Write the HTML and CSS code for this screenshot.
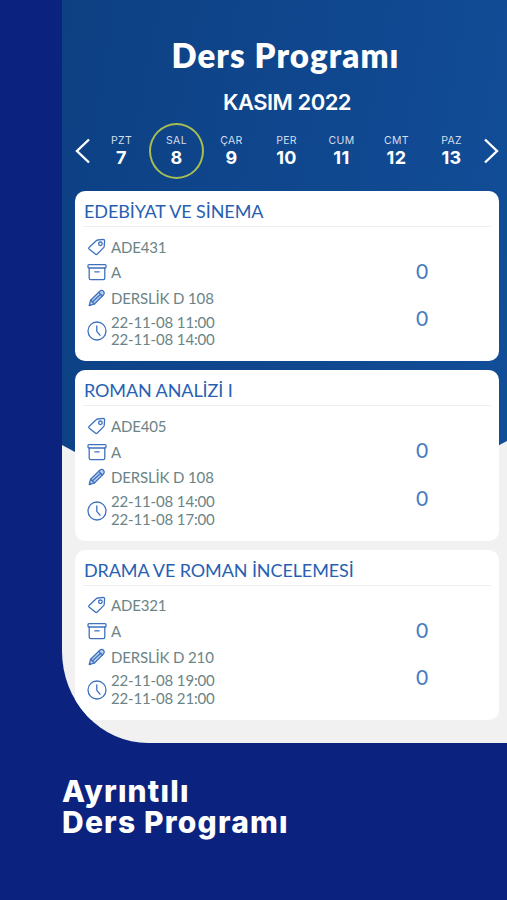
FILE: index.html
```
<!DOCTYPE html>
<html lang="tr">
<head>
    <meta charset="UTF-8">
    <meta name="viewport" content="width=device-width, initial-scale=1.0">
    <title>Ders Programı</title>
    <link rel="stylesheet" href="styles.css">
</head>
<body>
    <svg class="symbols" width="0" height="0">
        <symbol id="tag" viewBox="0 0 20 20">
            <path d="M2.3 10.2 9.5 3.6Q10 3.1 10.8 3L16.2 2.4Q17.6 2.4 17.6 3.8L17.2 9.4Q17.1 10.1 16.6 10.6L10.3 17Q9.3 17.9 8.3 17L2.3 12.3Q1.2 11.2 2.3 10.2Z"/>
            <circle cx="13.4" cy="6.8" r="1.8"/>
        </symbol>
        <symbol id="box" viewBox="0 0 20 20">
            <rect x="1" y="2.6" width="18" height="3.4" rx="1"/>
            <path d="M2.2 6V16Q2.2 17.6 3.8 17.6H16.2Q17.8 17.6 17.8 16V6M7.8 9.8H12.2"/>
        </symbol>
        <symbol id="pencil" viewBox="0 0 20 20">
            <path fill="#bfd2ec" d="M2.2 17.6 3.6 12.2 12.8 3.2Q14.8 1.6 16.5 3.2 18 5 16.6 6.8L7.4 16Z"/>
            <path d="M3.6 12.2 7.4 16M11.8 4.4 15.4 8M5.5 13.7 13.7 6.2M2.6 16.2 3.7 17.2"/>
        </symbol>
        <symbol id="clock" viewBox="0 0 20 20">
            <circle cx="10" cy="10" r="9"/>
            <path d="M9.8 5V10.3L13 14.2"/>
        </symbol>
    </svg>

    <div class="phone">
        <h1>Ders Programı</h1>
        <h2>KASIM 2022</h2>
        <div class="week">
            <svg class="arrow" viewBox="0 0 16 26"><path d="M14 1.5 2 13 14 24.5"/></svg>
            <div class="days">
                <div class="day"><span>PZT</span><b>7</b></div>
                <div class="day selected"><span>SAL</span><b>8</b></div>
                <div class="day"><span>ÇAR</span><b>9</b></div>
                <div class="day"><span>PER</span><b>10</b></div>
                <div class="day"><span>CUM</span><b>11</b></div>
                <div class="day"><span>CMT</span><b>12</b></div>
                <div class="day"><span>PAZ</span><b>13</b></div>
            </div>
            <svg class="arrow" viewBox="0 0 16 26"><path d="M2 1.5 14 13 2 24.5"/></svg>
        </div>

        <div class="lessons">
            <div class="card">
                <h3>EDEBİYAT VE SİNEMA</h3>
                <div class="cardBody">
                    <div class="info">
                        <div class="row"><svg><use href="#tag"/></svg><span>ADE431</span></div>
                        <div class="row"><svg><use href="#box"/></svg><span>A</span></div>
                        <div class="row"><svg><use href="#pencil"/></svg><span>DERSLİK D 108</span></div>
                        <div class="row time"><svg><use href="#clock"/></svg><span>22-11-08 11:00<br>22-11-08 14:00</span></div>
                    </div>
                    <div class="counts"><span>0</span><span>0</span></div>
                </div>
            </div>
            <div class="card">
                <h3>ROMAN ANALİZİ I</h3>
                <div class="cardBody">
                    <div class="info">
                        <div class="row"><svg><use href="#tag"/></svg><span>ADE405</span></div>
                        <div class="row"><svg><use href="#box"/></svg><span>A</span></div>
                        <div class="row"><svg><use href="#pencil"/></svg><span>DERSLİK D 108</span></div>
                        <div class="row time"><svg><use href="#clock"/></svg><span>22-11-08 14:00<br>22-11-08 17:00</span></div>
                    </div>
                    <div class="counts"><span>0</span><span>0</span></div>
                </div>
            </div>
            <div class="card">
                <h3>DRAMA VE ROMAN İNCELEMESİ</h3>
                <div class="cardBody">
                    <div class="info">
                        <div class="row"><svg><use href="#tag"/></svg><span>ADE321</span></div>
                        <div class="row"><svg><use href="#box"/></svg><span>A</span></div>
                        <div class="row"><svg><use href="#pencil"/></svg><span>DERSLİK D 210</span></div>
                        <div class="row time"><svg><use href="#clock"/></svg><span>22-11-08 19:00<br>22-11-08 21:00</span></div>
                    </div>
                    <div class="counts"><span>0</span><span>0</span></div>
                </div>
            </div>
        </div>
    </div>

    <div class="caption">
        <p>Ayrıntılı</p>
        <p>Ders Programı</p>
    </div>
</body>
</html>
```
FILE: styles.css
```
* {
    box-sizing: border-box;
}

body {
    margin: 0;
    height: 900px;
    overflow: hidden;
    background-color: #0b227f;
    font-family: Lato, "Open Sans", sans-serif;
}

h1, h2, h3, p {
    margin: 0;
}

.symbols {
    display: block;
}

svg {
    fill: none;
    stroke: #3e72bf;
    stroke-width: 1.3;
    stroke-linecap: round;
    stroke-linejoin: round;
}

.phone {
    position: relative;
    z-index: 0;
    margin-left: 62px;
    height: 743px;
    padding: 33px 8px 0 13px;
    background-color: #f1f1f2;
    border-bottom-left-radius: 86px 92px;
    overflow: hidden;
}

/* blue backdrop that runs to a point behind the cards */
.phone::before {
    content: "";
    position: absolute;
    z-index: -1;
    inset: 0 0 auto 0;
    height: 540px;
    background: linear-gradient(100deg, #0d4083, #124e99);
    clip-path: polygon(0 0, 100% 0, 100% 441px, 60% 535px, 13px 452px, 0 445px);
}

h1 {
    height: 45px;
    line-height: 45px;
    margin-right: 3px;
    text-align: center;
    font-size: 33px;
    font-weight: 800;
    letter-spacing: 1.1px;
    color: #fff;
}

h2 {
    height: 48px;
    line-height: 48px;
    text-align: center;
    font-family: Inter, sans-serif;
    font-size: 22px;
    font-weight: 600;
    letter-spacing: -0.5px;
    color: #fff;
}

.week {
    display: flex;
    align-items: center;
    justify-content: space-between;
    height: 50px;
}

.arrow {
    width: 16px;
    height: 26px;
    stroke: #fff;
    stroke-width: 2.4;
    stroke-linecap: butt;
    stroke-linejoin: miter;
}

.days {
    display: flex;
    width: 386px;
}

.day {
    display: flex;
    flex-direction: column;
    align-items: center;
    justify-content: center;
    flex: 0 0 55px;
    height: 56px;
    padding-bottom: 2px;
    font-family: Inter, sans-serif;
    color: #fff;
}

.day span {
    font-size: 10.5px;
    line-height: 15px;
    letter-spacing: 0.3px;
    color: #d3deef;
}

.day b {
    font-size: 18px;
    line-height: 20px;
    font-weight: 700;
    letter-spacing: 0.4px;
}

.selected {
    padding-bottom: 1px;
    border: 2px solid #a5bd51;
    border-radius: 50%;
}

.lessons {
    display: flex;
    flex-direction: column;
    gap: 9px;
    margin-top: 15px;
}

.card {
    height: 170.3px;
    padding: 5px 8px 0;
    border-radius: 10px;
    background-color: #fff;
}

h3 {
    height: 31px;
    line-height: 31px;
    padding-left: 1px;
    border-bottom: 1px solid #f0f0f1;
    font-size: 18px;
    font-weight: 400;
    letter-spacing: -0.1px;
    white-space: nowrap;
    color: #285fb2;
}

.cardBody {
    display: flex;
    justify-content: space-between;
}

.info {
    padding: 7px 0 0 4px;
}

.row {
    display: flex;
    align-items: center;
    gap: 4px;
    height: 25.6px;
    font-size: 15px;
    letter-spacing: -0.15px;
    color: #6b8486;
}

.row svg {
    width: 20px;
    height: 20px;
}

.time {
    height: 41px;
    line-height: 17.5px;
}

.counts {
    display: flex;
    flex-direction: column;
    width: 12px;
    margin: 20px 63px 0 0;
    font-size: 21px;
    line-height: 47.3px;
    text-align: center;
    color: #477bbf;
}

.counts span {
    height: 47.3px;
}

.caption {
    padding: 33px 0 0 62px;
    font-family: Inter, sans-serif;
    font-size: 30px;
    font-weight: 800;
    line-height: 31px;
    letter-spacing: 1.2px;
    color: #fff;
}
```
